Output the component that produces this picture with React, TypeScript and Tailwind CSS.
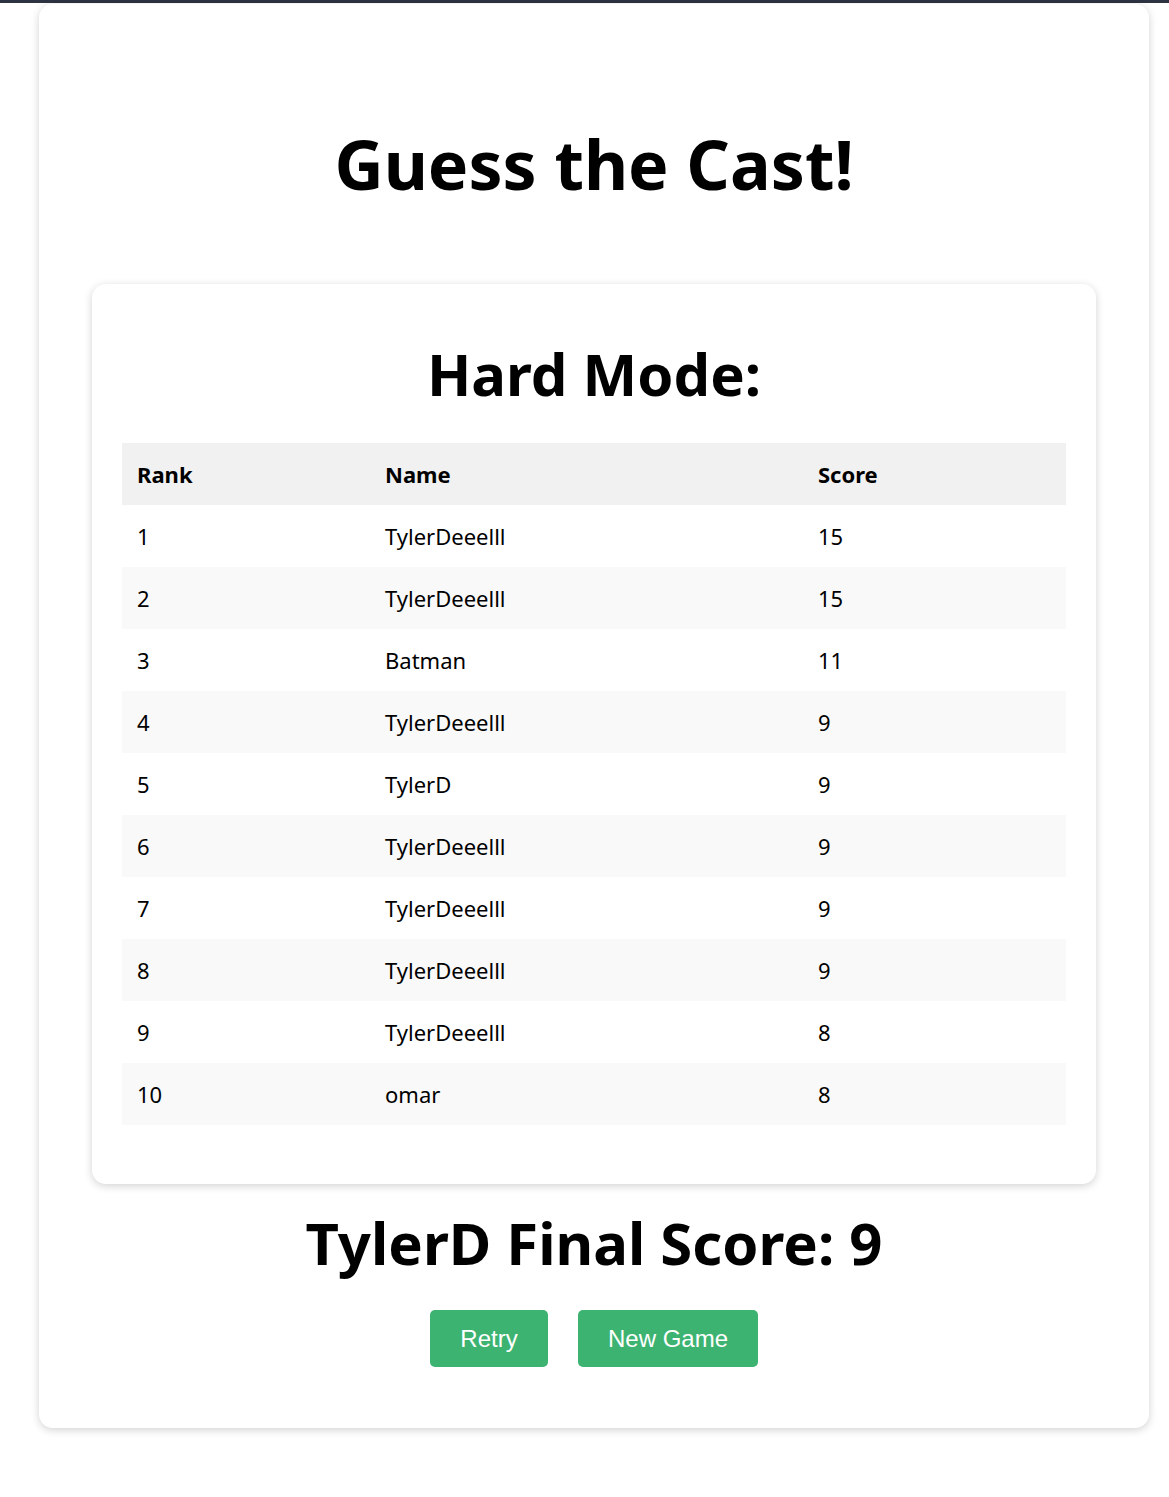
const scores = [
  { rank: 1, name: "TylerDeeelll", score: 15 },
  { rank: 2, name: "TylerDeeelll", score: 15 },
  { rank: 3, name: "Batman", score: 11 },
  { rank: 4, name: "TylerDeeelll", score: 9 },
  { rank: 5, name: "TylerD", score: 9 },
  { rank: 6, name: "TylerDeeelll", score: 9 },
  { rank: 7, name: "TylerDeeelll", score: 9 },
  { rank: 8, name: "TylerDeeelll", score: 9 },
  { rank: 9, name: "TylerDeeelll", score: 8 },
  { rank: 10, name: "omar", score: 8 },
];

export default function App() {
  return (
    <div
      className="min-h-[1497px] bg-white border-t-[3px] border-[#2d3340] text-black"
      style={{ fontFamily: '"Noto Sans", "Open Sans", sans-serif' }}
    >
      <div className="ml-[39px] mt-px w-[1110px] rounded-[14px] bg-white shadow-[0_2px_8px_rgba(0,0,0,0.18)] px-[53px] pt-[126px] pb-[61px]">
        <h1 className="text-center text-[68px] font-bold leading-none">
          Guess the Cast!
        </h1>

        <div className="mt-[86px] rounded-[14px] bg-white shadow-[0_2px_8px_rgba(0,0,0,0.18)] px-[30px] pt-[61px] pb-[59px]">
          <h2 className="text-center text-[58px] font-bold leading-none">
            Hard Mode:
          </h2>
          <table className="mt-[40px] w-full border-collapse text-[22px]">
            <thead>
              <tr className="bg-[#f1f1f1] h-[62px]">
                <th className="w-[248px] px-[15px] text-left font-bold">Rank</th>
                <th className="w-[433px] px-[15px] text-left font-bold">Name</th>
                <th className="px-[15px] text-left font-bold">Score</th>
              </tr>
            </thead>
            <tbody>
              {scores.map((s, i) => (
                <tr
                  key={s.rank}
                  className={i % 2 === 1 ? "bg-[#f9f9f9] h-[62px]" : "bg-white h-[62px]"}
                >
                  <td className="px-[15px]">{s.rank}</td>
                  <td className="px-[15px]">{s.name}</td>
                  <td className="px-[15px]">{s.score}</td>
                </tr>
              ))}
            </tbody>
          </table>
        </div>

        <h2 className="mt-[30px] text-center text-[58px] font-bold leading-none">
          TylerD Final Score: 9
        </h2>

        <div
          className="mt-[38px] flex justify-center gap-[30px]"
          style={{ fontFamily: '"Liberation Sans", Arial, sans-serif' }}
        >
          <button className="h-[57px] w-[118px] rounded-[5px] bg-[#3cb371] text-[24px] text-white">
            Retry
          </button>
          <button className="h-[57px] w-[180px] rounded-[5px] bg-[#3cb371] text-[24px] text-white">
            New Game
          </button>
        </div>
      </div>
    </div>
  );
}
